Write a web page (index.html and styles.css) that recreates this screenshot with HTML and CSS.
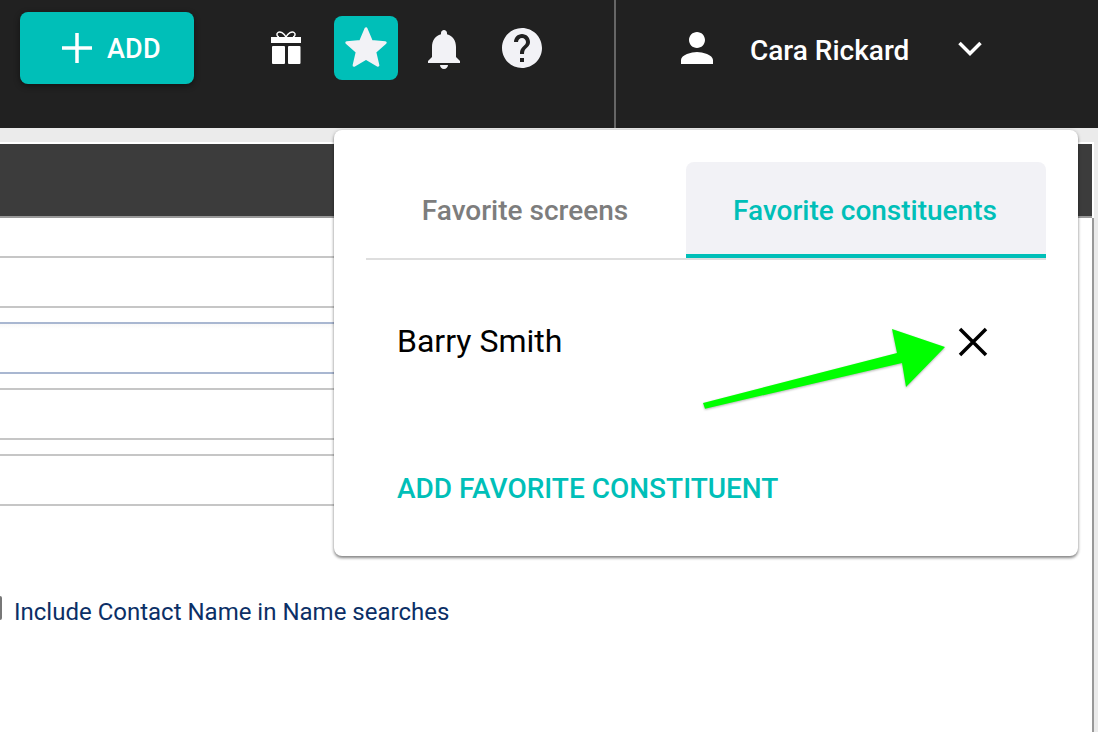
FILE: index.html
```html
<!DOCTYPE html>
<html lang="en">
<head>
<meta charset="utf-8">
<title>Favorite constituents</title>
<link rel="stylesheet" href="styles.css">
</head>
<body>
<div class="page">
  <header class="header">
    <button class="add-btn">
      <svg class="plus" viewBox="0 0 30 30"><path d="M15 0v30M0 15h30"/></svg>
      <span class="add-text">ADD</span>
    </button>
    <nav class="icons">
      <svg class="icon" viewBox="0 0 48 48">
        <path class="bow" d="M24 13c-2-4-6-6-8-4.500-2 1.500-1 4 1 4.500M24 13c2-4 6-6 8-4.500 2 1.500 1 4-1 4.500"/>
        <rect class="gift" x="9" y="13" width="30" height="6"/>
        <rect class="gift" x="10" y="22" width="13" height="18" rx="1"/>
        <rect class="gift" x="26" y="22" width="12.500" height="18" rx="1"/>
      </svg>
      <span class="star-box">
        <svg class="star" viewBox="0 0 24 24"><path d="M12 17.270L18.180 21l-1.640-7.030L22 9.240l-7.190-.61L12 2 9.190 8.630 2 9.240l5.460 4.730L5.820 21z"/></svg>
      </span>
      <svg class="icon bell" viewBox="0 0 24 24"><path d="M12 22c1.100 0 2-.9 2-2h-4c0 1.100.89 2 2 2zm6-6v-5c0-3.070-1.640-5.640-4.500-6.320V4c0-.83-.67-1.500-1.500-1.500s-1.500.67-1.500 1.500v.68C7.630 5.360 6 7.920 6 11v5l-2 2v1h16v-1l-2-2z"/></svg>
      <svg class="icon help" viewBox="0 0 24 24"><path d="M12 2C6.480 2 2 6.480 2 12s4.480 10 10 10 10-4.480 10-10S17.520 2 12 2zm1 17h-2v-2h2v2zm2.070-7.750l-.9.92C13.450 12.900 13 13.500 13 15h-2v-.5c0-1.100.45-2.100 1.170-2.830l1.240-1.260c.37-.36.59-.86.59-1.410 0-1.100-.9-2-2-2s-2 .9-2 2H8c0-2.210 1.790-4 4-4s4 1.790 4 4c0 .88-.36 1.680-.93 2.250z"/></svg>
    </nav>
    <div class="divider"></div>
    <div class="user">
      <svg class="icon person" viewBox="0 0 24 24"><path d="M12 12c2.210 0 4-1.790 4-4s-1.790-4-4-4-4 1.790-4 4 1.790 4 4 4zm0 2c-2.670 0-8 1.340-8 4v2h16v-2c0-2.660-5.330-4-8-4z"/></svg>
      <span class="name">Cara Rickard</span>
      <svg class="chevron" viewBox="0 0 24 15"><path d="M1.500 2l10.500 10.500L22.500 2"/></svg>
    </div>
  </header>
  <main class="workspace">
    <div class="panel">
      <div class="band"></div>
      <div class="form">
        <div class="line first"></div>
        <div class="line second"></div>
        <div class="box focused"></div>
        <div class="box"></div>
        <div class="box"></div>
        <div class="check-row">
          <span class="checkbox"></span>
          <span class="check-label">Include Contact Name in Name searches</span>
        </div>
      </div>
    </div>
  </main>
  <section class="popover">
    <div class="tabs">
      <div class="tab">Favorite screens</div>
      <div class="tab active">Favorite constituents</div>
    </div>
    <div class="fav-row">
      <span class="fav-name">Barry Smith</span>
      <svg class="close" viewBox="0 0 30 30"><path d="M2 2l26 26M28 2L2 28"/></svg>
    </div>
    <div class="add-link">ADD FAVORITE CONSTITUENT</div>
  </section>
  <svg class="arrow" viewBox="0 0 260 90">
    <polygon points="3,73 197,23 192,-1 245,17 206,57 202,33 5,78.700"/>
  </svg>
</div>
</body>
</html>
```
FILE: styles.css
```css
* { box-sizing: border-box; }
html, body { margin: 0; padding: 0; }
body { font-family: Roboto, "Liberation Sans", sans-serif; overflow: hidden; }

.page { position: relative; width: 1098px; height: 732px; display: flex; flex-direction: column; overflow: hidden; }

.header { flex: none; height: 128px; background: #212121; display: flex; align-items: flex-start; }

.add-btn {
  width: 174px; height: 72px; margin: 12px 0 0 20px; padding: 0 0 0 42px;
  border: 0; border-radius: 8px; background: #00bfb8; color: #fff;
  display: flex; align-items: center; gap: 15px;
  font: 500 27px Roboto, sans-serif; letter-spacing: 0.2px;
  box-shadow: 0 2px 6px rgba(0, 0, 0, 0.45);
}
.add-text { padding-top: 2px; }
.plus { width: 30px; height: 30px; flex: none; }
.plus path { stroke: #fff; stroke-width: 3.500; fill: none; }

.icons { display: flex; align-items: center; height: 96px; margin-left: 68px; }
.icon { width: 48px; height: 48px; flex: none; display: block; }
.gift { fill: #fff; }
.bow { fill: none; stroke: #fff; stroke-width: 1.500; }
.star-box { width: 64px; height: 64px; margin-left: 24px; border-radius: 8px; background: #00bfb8; display: flex; align-items: center; justify-content: center; }
.star { width: 46px; height: 46px; }
.star path { fill: #f2f2f6; stroke: #f2f2f6; stroke-width: 1.600; stroke-linejoin: round; }
.bell { margin: 2px 0 0 22px; }
.bell path, .help path { fill: #f2f2f6; }
.person path { fill: #fff; }
.help { margin-left: 30px; }

.divider { align-self: stretch; width: 2px; margin-left: 68px; background: #666; }

.user { display: flex; align-items: center; height: 96px; margin-left: 57px; }
.name { width: 208px; margin-left: 29px; color: #fff; font-size: 28px; font-weight: 500; line-height: 32px; padding-top: 6px; }
.chevron { width: 24px; height: 15px; flex: none; }
.chevron path { fill: none; stroke: #fff; stroke-width: 3.500; }

.workspace { flex: 1; min-height: 0; background: #ebebeb; padding: 14px 4px 0 0; }
.panel { height: 100%; background: #fff; padding: 0 2px 0 0; border-top: 2px solid #fff; display: flex; flex-direction: column; }
.band { flex: none; height: 74px; background: #3c3c3c; border-bottom: 2px solid #999; }
.form { flex: 1; border-right: 2px solid #999; margin-right: -2px; padding-right: 40px; }

.line { border-bottom: 2px solid #c6c6c6; }
.line.first { height: 40px; }
.line.second { height: 50px; }
.box { height: 52px; margin-top: 14px; border-top: 2px solid #c6c6c6; border-bottom: 2px solid #c6c6c6; }
.box.focused { border-color: #a9b7d1; background: linear-gradient(#f8f8f8, #fff 5px); }

.check-row { display: flex; align-items: flex-start; gap: 12px; margin-top: 90px; }
.checkbox { width: 2px; height: 24px; flex: none; background: #777; border-radius: 0 2px 2px 0; }
.check-label { color: #0b2f66; font-size: 24px; line-height: 32px; white-space: nowrap; }

.popover {
  position: absolute; left: 334px; top: 130px; width: 744px; height: 426px;
  background: #fff; border-radius: 8px; padding: 32px 32px 0;
  box-shadow: 0 2px 3px rgba(0, 0, 0, 0.45), 0 0 4px rgba(0, 0, 0, 0.12);
}
.tabs { display: flex; height: 98px; border-bottom: 2px solid #dedede; }
.tab { width: 320px; height: 96px; display: flex; align-items: center; justify-content: center; color: #7d7d7d; font-size: 28px; font-weight: 500; padding: 0 2px 0 0; }
.tab.active { width: 360px; background: #f2f2f6; color: #00bfb8; border-radius: 8px 8px 0 0; border-bottom: 4px solid #00bfb8; padding: 4px 2px 0 0; }

.fav-row { display: flex; align-items: center; justify-content: space-between; height: 40px; margin: 62px 58px 0 31px; }
.fav-name { color: #000; font-size: 32px; line-height: 40px; padding-bottom: 2px; }
.close { width: 30px; height: 30px; flex: none; }
.close path { fill: none; stroke: #000; stroke-width: 3.500; }

.add-link { margin: 109px 0 0 31px; color: #00bfb8; font-size: 28px; font-weight: 500; line-height: 36px; }

.arrow { position: absolute; left: 700px; top: 330px; width: 260px; height: 90px; overflow: visible; filter: drop-shadow(0 1px 1px rgba(0, 0, 0, 0.3)); }
.arrow polygon { fill: #00ff00; }
```
